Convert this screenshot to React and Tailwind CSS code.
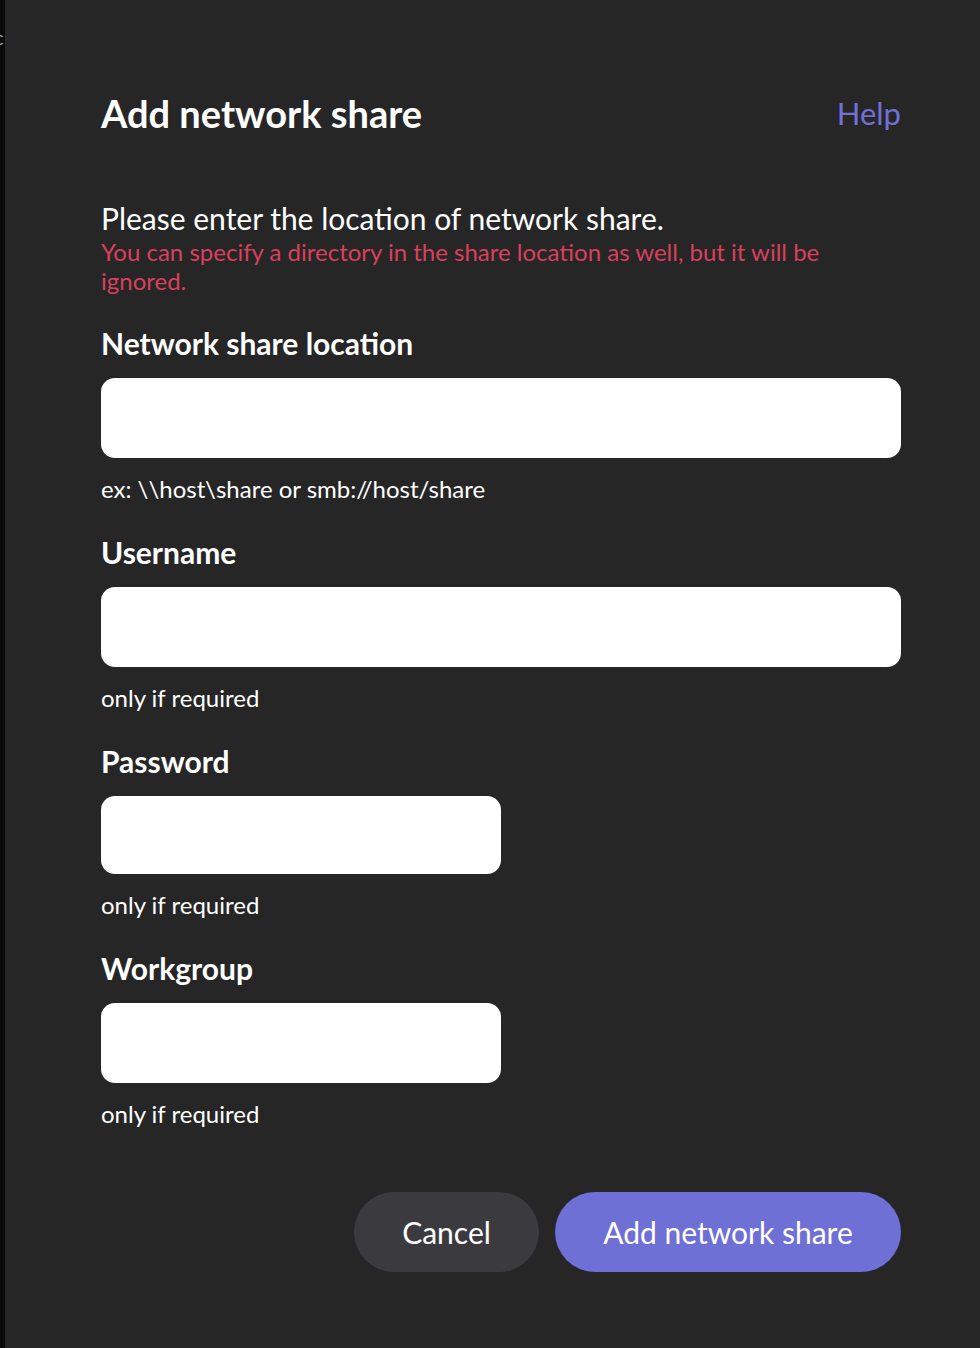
export default function App() {
  const fields = [
    { label: "Network share location", hint: "ex: \\\\host\\share or smb://host/share", size: "h-[80px] w-[800px]" },
    { label: "Username", hint: "only if required", size: "h-[80px] w-[800px]" },
    { label: "Password", hint: "only if required", size: "h-[78px] w-[400px]", type: "password" },
    { label: "Workgroup", hint: "only if required", size: "h-[80px] w-[400px]" },
  ];

  return (
    <div className="flex min-h-[1348px] w-[980px] bg-[#262626] font-['Lato','Noto_Sans',sans-serif] text-white">
      {/* left edge of the window behind */}
      <div className="relative w-[5px] shrink-0 overflow-hidden bg-[#0b0b0b]">
        <span className="absolute left-[-6px] top-[27px] text-[20px] leading-none text-[#9a9a9a]">c</span>
      </div>

      <div className="flex flex-1 flex-col pl-[96px] pr-[79px] pt-[91px]">
        <div className="flex items-center justify-between">
          <h1 className="text-[38px] font-bold leading-[44px]">Add network share</h1>
          <a href="#" className="text-[31px] leading-[44px] text-[#7070d8]">Help</a>
        </div>

        <p className="mt-[66px] text-[30px] leading-[34px]">Please enter the location of network share.</p>
        <p className="mt-[2px] max-w-[760px] text-[24px] leading-[29px] text-[#d9405c]">
          You can specify a directory in the share location as well, but it will be ignored.
        </p>

        <form className="mt-[30px] flex flex-col">
          {fields.map((f, i) => (
            <div key={f.label} className={i > 0 ? "mt-[30px]" : ""}>
              <label className="block text-[30px] font-bold leading-[36px]">{f.label}</label>
              <input
                type={f.type || "text"}
                className={`mt-[17px] block rounded-[14px] bg-white px-4 text-[22px] text-black outline-none ${f.size}`}
              />
              <p className="mt-[16px] text-[24px] leading-[30px]">{f.hint}</p>
            </div>
          ))}

          <div className="mt-[63px] flex justify-end gap-[16px]">
            <button
              type="button"
              className="h-[80px] w-[185px] rounded-full bg-[#3b3b3f] text-[30px] text-white"
            >
              Cancel
            </button>
            <button
              type="submit"
              className="h-[80px] w-[346px] rounded-full bg-[#6f70d6] text-[30px] text-white"
            >
              Add network share
            </button>
          </div>
        </form>
      </div>
    </div>
  );
}
